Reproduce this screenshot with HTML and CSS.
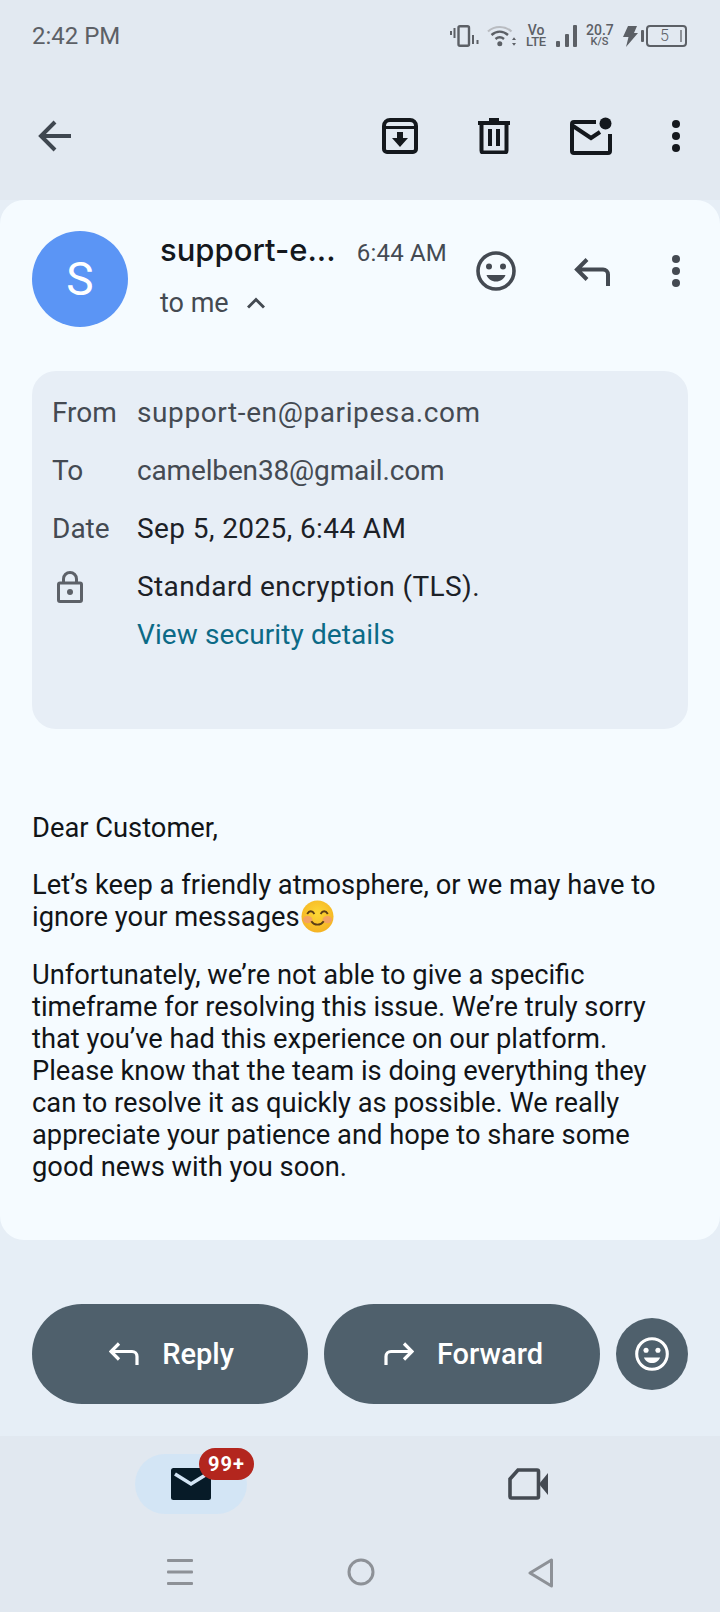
FILE: index.html
```html
<!DOCTYPE html>
<html lang="en">
<head>
    <meta charset="UTF-8">
    <meta name="viewport" content="width=device-width, initial-scale=1.0">
    <title>Gmail message</title>
    <link rel="stylesheet" href="styles.css">
</head>
<body>
<div class="phone">

    <div class="status-bar">
        <span class="clock">2:42 PM</span>
        <div class="status-icons">
            <svg width="29" height="22" viewBox="0 0 29 22" fill="none" stroke="#5c6066"><rect x="8.500" y="1.200" width="10.500" height="19.600" rx="1.500" stroke-width="2.400"/><path d="M1 6v4M4.500 3v10M23 10v9M27.500 15v4" stroke-width="2"/></svg>
            <svg class="wifi" width="29" height="22" viewBox="0 0 29 22" fill="none"><path d="M1 6.500C7.500 .5 18 .5 24.500 6.500" stroke="#b9bcc1" stroke-width="2.200"/><path d="M4.500 10C9.500 5.500 16 5.500 21 10" stroke="#5c6066" stroke-width="2.400"/><path d="M8.500 14c2.800-2.400 5.700-2.400 8.500 0" stroke="#5c6066" stroke-width="2.400"/><circle cx="12.800" cy="18.800" r="2.500" fill="#5c6066"/><path d="M25 15h4l-2-2.800zM25 18h4l-2 2.800z" fill="#5c6066"/></svg>
            <span class="volte">Vo<br><small>LTE</small></span>
            <svg width="21" height="22" viewBox="0 0 21 22" fill="#5c6066"><rect x="0" y="16" width="4" height="6" rx="1"/><rect x="9" y="9" width="4" height="13" rx="1"/><rect x="17" y="0" width="4" height="22" rx="1"/></svg>
            <span class="speed">20.7<br><small>K/S</small></span>
            <svg class="bolt" width="15" height="21" viewBox="0 0 15 21" fill="#5c6066"><path d="M5 0h9l-3 7h4L3 21l2.500-10H0z"/></svg>
            <div class="battery-tip"></div>
            <div class="battery"><span>5</span><i></i></div>
        </div>
    </div>

    <div class="toolbar">
        <svg class="back" width="36" height="32" viewBox="0 0 36 32" fill="none" stroke="#3f4750" stroke-width="4"><path d="M34 16H4M18 2L4 16l14 14"/></svg>
        <div class="toolbar-actions">
            <svg width="36" height="36" viewBox="0 0 36 36" fill="none"><path d="M2 8a6 6 0 0 1 6-6h20a6 6 0 0 1 6 6v23a3 3 0 0 1-3 3H5a3 3 0 0 1-3-3z" stroke="#14181d" stroke-width="4"/><path d="M2 9.500h32" stroke="#14181d" stroke-width="3"/><path d="M15 14h6v6h5l-8 9-8-9h5z" fill="#14181d"/></svg>
            <svg width="32" height="36" viewBox="0 0 32 36" fill="none" stroke="#14181d" stroke-width="4"><path d="M0 5h32" /><path d="M11 1.500h10" stroke-width="3"/><path d="M3.500 5v27.500a2 2 0 0 0 2 2h21a2 2 0 0 0 2-2V5"/><path d="M12 11v17M20 11v17"/></svg>
            <svg width="42" height="38" viewBox="0 0 42 38" fill="none"><path d="M26 5H4a2 2 0 0 0-2 2v27a2 2 0 0 0 2 2h34a2 2 0 0 0 2-2V17" stroke="#14181d" stroke-width="4"/><path d="M3 9l18 12 9-6" stroke="#14181d" stroke-width="4"/><circle cx="35.500" cy="6.500" r="6" fill="#14181d"/></svg>
            <svg class="dots" width="8" height="32" viewBox="0 0 8 32" fill="#14181d"><circle cx="4" cy="4" r="4"/><circle cx="4" cy="16" r="4"/><circle cx="4" cy="28" r="4"/></svg>
        </div>
    </div>

    <div class="card">
        <div class="msg-head">
            <div class="avatar">S</div>
            <div class="sender">
                <div class="sender-line">
                    <span class="sender-name">support-e...</span>
                    <span class="sender-time">6:44 AM</span>
                </div>
                <div class="recipient">
                    <span>to me</span>
                    <svg width="18" height="12" viewBox="0 0 18 12" fill="none" stroke="#444a52" stroke-width="3"><path d="M1 10.500l8-8 8 8"/></svg>
                </div>
            </div>
            <div class="msg-actions">
                <svg width="40" height="40" viewBox="0 0 40 40"><circle cx="20" cy="20" r="18" fill="none" stroke="#444a52" stroke-width="3.600"/><circle cx="13" cy="15.500" r="3" fill="#444a52"/><circle cx="27" cy="15.500" r="3" fill="#444a52"/><path d="M10.500 24h19c-1.500 4-5 6.500-9.500 6.500s-8-2.500-9.500-6.500z" fill="#444a52"/></svg>
                <svg class="reply-ic" width="36" height="28" viewBox="0 0 36 28" fill="none" stroke="#444a52" stroke-width="4"><path d="M13 1.500L3 11.500l10 10M3 11.500h26a5 5 0 0 1 5 5V28"/></svg>
                <svg class="card-dots" width="8" height="32" viewBox="0 0 8 32" fill="#444a52"><circle cx="4" cy="4" r="4"/><circle cx="4" cy="16" r="4"/><circle cx="4" cy="28" r="4"/></svg>
            </div>
        </div>

        <div class="details">
            <div class="detail-row"><span class="detail-label">From</span><span class="detail-from">support-en@paripesa.com</span></div>
            <div class="detail-row"><span class="detail-label">To</span><span class="detail-to">camelben38@gmail.com</span></div>
            <div class="detail-row"><span class="detail-label">Date</span><span class="detail-value">Sep 5, 2025, 6:44 AM</span></div>
            <div class="detail-row">
                <span class="detail-label">
                    <svg class="lock" width="26" height="32" viewBox="0 0 26 32" fill="none" stroke="#5d6168" stroke-width="3"><rect x="1.500" y="12" width="23" height="18.500" rx="1.500"/><path d="M6.500 12V8a6.500 6.500 0 0 1 13 0v4"/><circle cx="13" cy="21" r="3" fill="#5d6168" stroke="none"/></svg>
                </span>
                <span class="detail-value">Standard encryption (TLS).</span>
            </div>
            <a class="security-link">View security details</a>
        </div>

        <div class="body-text">
            <p class="greeting">Dear Customer,</p>
            <p>Let’s keep a friendly atmosphere, or we may have to<br>ignore your messages<svg class="emoji" width="33" height="33" viewBox="0 0 32 32"><defs><radialGradient id="face" cx="50%" cy="40%" r="60%"><stop offset="0%" stop-color="#fdd835"/><stop offset="100%" stop-color="#f5b324"/></radialGradient></defs><circle cx="16" cy="16" r="15.500" fill="url(#face)"/><ellipse cx="6.500" cy="19" rx="4.500" ry="3.500" fill="#f39a6f" opacity=".8"/><ellipse cx="25.500" cy="19" rx="4.500" ry="3.500" fill="#f39a6f" opacity=".8"/><path d="M6 13.500c2-3.500 5-3.500 7 0M19 13.500c2-3.500 5-3.500 7 0M10 20.500c3 4.500 9 4.500 12 0" fill="none" stroke="#5b3d16" stroke-width="1.800"/></svg></p>
            <p>Unfortunately, we’re not able to give a specific<br>timeframe for resolving this issue. We’re truly sorry<br>that you’ve had this experience on our platform.<br>Please know that the team is doing everything they<br>can to resolve it as quickly as possible. We really<br>appreciate your patience and hope to share some<br>good news with you soon.</p>
        </div>
    </div>

    <div class="reply-bar">
        <button class="pill-btn">
            <svg width="30" height="24" viewBox="0 0 30 24" fill="none" stroke="#fff" stroke-width="3.200"><path d="M10 1.500L2 9.500l8 8M2 9.500h21a5 5 0 0 1 5 5V23"/></svg>
            Reply
        </button>
        <button class="pill-btn">
            <svg width="30" height="24" viewBox="0 0 30 24" fill="none" stroke="#fff" stroke-width="3.200"><path d="M20 1.500l8 8-8 8M28 9.500H7a5 5 0 0 0-5 5V23"/></svg>
            Forward
        </button>
        <button class="round-btn">
            <svg width="34" height="34" viewBox="0 0 40 40"><circle cx="20" cy="20" r="18" fill="none" stroke="#fff" stroke-width="3.600"/><circle cx="13" cy="15.500" r="3" fill="#fff"/><circle cx="27" cy="15.500" r="3" fill="#fff"/><path d="M10.500 24h19c-1.500 4-5 6.500-9.500 6.500s-8-2.500-9.500-6.500z" fill="#fff"/></svg>
        </button>
    </div>

    <div class="bottom-nav">
        <div class="nav-tabs">
            <div class="mail-tab">
                <svg width="40" height="32" viewBox="0 0 40 32"><rect width="40" height="32" rx="2.500" fill="#071b28"/><path d="M4 6l16 10 16-10" fill="none" stroke="#d3e5f5" stroke-width="3.600"/></svg>
                <span class="badge">99+</span>
            </div>
            <div class="video-tab">
                <svg width="40" height="32" viewBox="0 0 40 32" fill="none"><path d="M10 2h19a1.500 1.500 0 0 1 1.500 1.500v25a1.500 1.500 0 0 1-1.500 1.500H3.500A1.500 1.500 0 0 1 2 28.500V11z" stroke="#444a52" stroke-width="3.600"/><path d="M40 5L31 16l9 11z" fill="#444a52"/></svg>
            </div>
        </div>
        <div class="system-nav">
            <svg width="28" height="28" viewBox="0 0 28 28" fill="#8d9197"><rect x="1" y="1" width="26" height="3" rx="1"/><rect x="1" y="12.500" width="26" height="3" rx="1"/><rect x="1" y="24" width="26" height="3" rx="1"/></svg>
            <svg width="28" height="28" viewBox="0 0 28 28" fill="none" stroke="#8d9197" stroke-width="3"><circle cx="14" cy="14" r="12"/></svg>
            <svg width="26" height="30" viewBox="0 0 26 30" fill="none" stroke="#8d9197" stroke-width="3" stroke-linejoin="round"><path d="M23.500 2v26L2 15z"/></svg>
        </div>
    </div>

</div>
</body>
</html>
```

FILE: styles.css
```css
* {
    box-sizing: border-box;
}

body {
    margin: 0;
    font-family: Roboto, sans-serif;
    background-color: #e2e9f1;
}

svg {
    display: block;
    flex-shrink: 0;
}

.phone {
    width: 720px;
    height: 1612px;
    overflow: hidden;
    display: flex;
    flex-direction: column;
    background-color: #e6eef6;
}

/* status bar */
.status-bar {
    height: 72px;
    padding: 0 33px 0 32px;
    display: flex;
    justify-content: space-between;
    align-items: center;
    background-color: #e2e9f1;
}

.clock {
    font-size: 24px;
    color: #5c6066;
}

.status-icons {
    display: flex;
    align-items: center;
    gap: 9px;
}

.wifi {
    margin-left: -1px;
}

.volte,
.speed {
    font-size: 14px;
    line-height: 11px;
    font-weight: 500;
    color: #5c6066;
    text-align: center;
}

.volte {
    width: 22px;
}

.volte small {
    display: block;
    font-size: 13px;
    letter-spacing: -0.3px;
}

.speed {
    width: 27px;
}

.speed small {
    font-size: 11px;
    display: block;
}

.bolt {
    margin-left: 1px;
}

.battery-tip {
    width: 3px;
    height: 12px;
    margin: 0 -7px 0 -6px;
    background-color: #5c6066;
    border-radius: 1px;
}

.battery {
    width: 41px;
    height: 22px;
    padding: 0 3px 0 12px;
    border: 2px solid #5c6066;
    border-radius: 4px;
    font-size: 16px;
    line-height: 18px;
    font-weight: 300;
    color: #5c6066;
    display: flex;
    justify-content: space-between;
}

.battery i {
    width: 2px;
    height: 12px;
    margin-top: 3px;
    background-color: #8d9197;
}

/* top toolbar */
.toolbar {
    height: 128px;
    padding: 0 40px 0 37px;
    display: flex;
    justify-content: space-between;
    align-items: center;
    background-color: #e2e9f1;
}

.toolbar-actions {
    display: flex;
    align-items: center;
    gap: 60px;
}

/* message card */
.card {
    height: 1040px;
    padding: 31px 32px 0;
    background-color: #f5fbff;
    border-radius: 24px;
}

.msg-head {
    display: flex;
    height: 96px;
}

.avatar {
    width: 96px;
    height: 96px;
    border-radius: 50%;
    background-color: #5b95f5;
    color: white;
    font-size: 46px;
    line-height: 96px;
    text-align: center;
}

.sender {
    margin-left: 32px;
    width: 287px;
}

.sender-line {
    display: flex;
    align-items: baseline;
    justify-content: space-between;
    height: 40px;
}

.sender-name {
    font-family: Inter, sans-serif;
    font-size: 31px;
    font-weight: 500;
    color: #14181d;
}

.sender-time {
    font-size: 24px;
    letter-spacing: 0.2px;
    color: #444a52;
}

.recipient {
    margin-top: 16px;
    display: flex;
    align-items: center;
    gap: 18px;
    font-size: 27px;
    color: #444a52;
}

.msg-actions {
    flex: 1;
    padding: 20px 8px 0 29px;
    display: flex;
    align-items: flex-start;
    justify-content: space-between;
}

.reply-ic {
    margin: 7px 0 0 -4px;
}

.card-dots {
    margin-top: 4px;
}

.details {
    height: 358px;
    margin-top: 44px;
    padding: 22px 20px;
    background-color: #e7eef6;
    border-radius: 24px;
    font-size: 28px;
    color: #1c2127;
}

.detail-row {
    display: flex;
    height: 58px;
    line-height: 40px;
}

.detail-label {
    width: 85px;
    color: #444a52;
}

.detail-from {
    color: #444a52;
    letter-spacing: 0.6px;
}

.detail-to {
    color: #444a52;
    letter-spacing: -0.15px;
}

.detail-value {
    letter-spacing: 0.4px;
}

.lock {
    margin: 4px 0 0 5px;
}

.security-link {
    display: block;
    margin-left: 85px;
    margin-top: -10px;
    line-height: 40px;
    letter-spacing: 0.1px;
    color: #0c6a86;
}

.body-text {
    margin-top: 83px;
    font-size: 27.3px;
    line-height: 32px;
    color: #111417;
}

.body-text p {
    margin: 0 0 26px;
}

.body-text .greeting {
    margin-bottom: 25px;
}

.emoji {
    display: inline-block;
    vertical-align: -1px;
    margin: -6px 0 -6px 1px;
}

/* reply buttons */
.reply-bar {
    height: 196px;
    padding: 64px 32px 0;
    display: flex;
    gap: 16px;
}

.pill-btn {
    width: 276px;
    height: 100px;
    padding: 0 0 0 3px;
    border: none;
    border-radius: 50px;
    background-color: #4f606c;
    color: white;
    font-family: Roboto, sans-serif;
    font-size: 29px;
    font-weight: 500;
    display: flex;
    align-items: center;
    justify-content: center;
    gap: 23px;
}

.round-btn {
    width: 72px;
    height: 72px;
    margin-top: 14px;
    padding: 0;
    border: none;
    border-radius: 50%;
    background-color: #4f606c;
    display: flex;
    align-items: center;
    justify-content: center;
}

/* bottom navigation */
.bottom-nav {
    flex: 1;
    background-color: #e1e8f0;
}

.nav-tabs {
    display: flex;
    padding: 18px 0 0 135px;
}

.mail-tab {
    position: relative;
    width: 112px;
    height: 60px;
    border-radius: 30px;
    background-color: #d3e5f5;
    display: flex;
    align-items: center;
    justify-content: center;
}

.badge {
    position: absolute;
    left: 64px;
    top: -6px;
    width: 55px;
    height: 32px;
    border-radius: 16px;
    background-color: #b3261e;
    color: white;
    font-size: 20px;
    font-weight: 700;
    letter-spacing: 1px;
    line-height: 32px;
    text-align: center;
}

.video-tab {
    margin: 14px 0 0 261px;
}

.system-nav {
    margin-top: 44px;
    display: flex;
    justify-content: space-between;
    padding: 0 166px;
}
```
